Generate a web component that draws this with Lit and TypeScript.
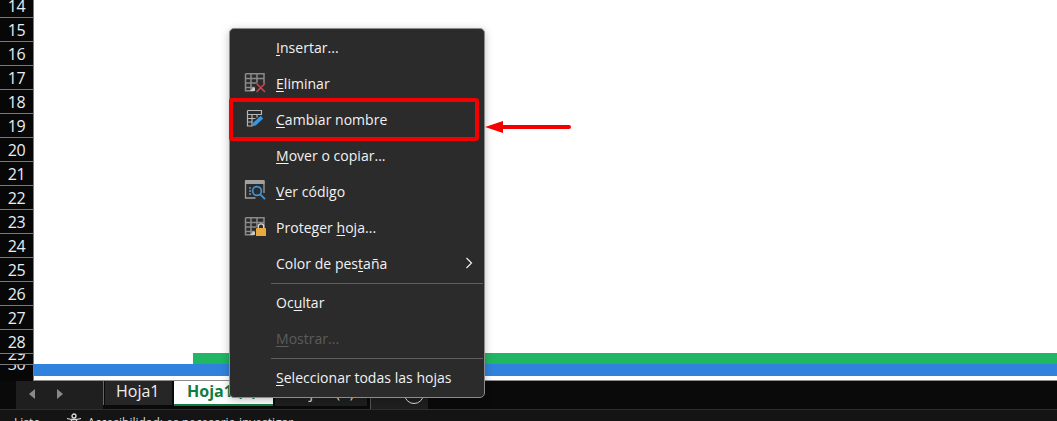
import { LitElement, html, css, svg } from "lit";
import { customElement } from "lit/decorators.js";

const grid = svg`<path d="M1.5 .8h18.5v10M1.5 .8v17h8l-2.5 0M1.5 5.5h18.5M1.5 10h11M1.5 14.5h9M7 .8v17M13 .8v9M20 .8v9" fill="none" stroke="#8a8a8a" stroke-width="1.5"/><path d="M6 18l3-3.5h2V18z" fill="#c8c8c8"/>`;

const icons: Record<string, unknown> = {
  del: html`<svg viewBox="0 0 22 20" width="22" height="20">${grid}<path d="M12.5 10.5l8.5 8.5M21 10.5l-8.5 8.5" stroke="#c8474d" stroke-width="1.6" fill="none"/></svg>`,
  ren: html`<svg viewBox="0 0 22 20" width="22" height="20"><path d="M3.5 1.5h14v4.5M3.5 1.5v15.5h5M3.5 5.5h14M3.5 9.5h8M3.5 13h5M8 5.5v11.5M13 5.5v3" fill="none" stroke="#b5b5b5" stroke-width="1.2"/><path d="M8.2 17.6l1.2-4 7.2-6.8 2.6 2.6-7.2 6.9z" fill="#3a96dd"/></svg>`,
  code: html`<svg viewBox="0 0 22 20" width="22" height="20" style="overflow:visible"><path d="M1.5 0v17h10M20 0v12" fill="none" stroke="#a0a0a0" stroke-width="1.3"/><path d="M1 -1h19.5v4H1z" fill="#a0a0a0"/><path d="M5 7h2M5 10h2M5 13h2" stroke="#8a8a8a" stroke-width="1.4"/><circle cx="13" cy="10" r="4.4" fill="none" stroke="#3a96dd" stroke-width="1.7"/><path d="M16 13.2l5 5" stroke="#3a96dd" stroke-width="1.9"/></svg>`,
  prot: html`<svg viewBox="0 0 22 20" width="22" height="20">${grid}<rect x="12" y="11" width="10" height="8" rx=".5" fill="#e8a93f"/><path d="M14.3 11V9.5a2.7 2.7 0 0 1 5.4 0V11" fill="none" stroke="#d8d8d8" stroke-width="1.3"/></svg>`,
};

const rows = [14, 15, 16, 17, 18, 19, 20, 21, 22, 23, 24, 25, 26, 27, 28];

@customElement("app-root")
export class AppRoot extends LitElement {
  static styles = css`
    :host { display: block; width: 1057px; height: 421px; overflow: hidden; position: relative; background: #fff;
      font-family: "Open Sans", "Noto Sans", sans-serif; }
    .sheet { display: grid; grid-template-columns: 34px 1fr; height: 381px; }
    .head { background: #070707; display: flex; flex-direction: column; justify-content: flex-end; border-right: 1px solid #7a7a7a; overflow: hidden; }
    .rn { flex: none; height: 24px; box-sizing: border-box; border-bottom: 1px solid #7a7a7a; color: #e6edf5; font-size: 16px; letter-spacing: -.5px; display: flex; align-items: center; justify-content: center; overflow: hidden; line-height: 16px; }
    .rn.s29 { height: 11px; align-items: flex-end; }
    .rn.s29 span { margin-bottom: 2px; }
    .rn.s30 { height: 16px; align-items: flex-start; border-bottom: 0; }
    .rn.s30 span { margin-top: -9px; }
    .cells { display: flex; flex-direction: column; justify-content: flex-end; border-bottom: 1px solid #8c8c8c; }
    .green { height: 11px; margin-left: 159px; background: #21b663; }
    .blue { height: 12px; background: #3182dc; margin-bottom: 4px; }
    .tabs { height: 28px; background: #0a0a0a; display: flex; align-items: flex-start; }
    .nav { width: 87px; height: 28px; margin-left: 16px; background: #1f1f1f; display: flex; align-items: center; gap: 22px; padding: 0 0 2px 13px; box-sizing: border-box; flex: none; }
    .tri { width: 0; height: 0; border-top: 5px solid transparent; border-bottom: 5px solid transparent; }
    .tri.l { border-right: 6px solid #8a8a8a; }
    .tri.r { border-left: 6px solid #8a8a8a; }
    .tab { box-sizing: border-box; height: 25px; font-size: 16px; display: flex; align-items: center; flex: none; padding-bottom: 4px; }
    .t1 { width: 71px; height: 24px; background: #262626; color: #eee; border-left: 1px solid #666; padding-left: 12px; border-right: 2px solid #0a0a0a; box-shadow: inset 1px 0 0 #0a0a0a; }
    .t2 { width: 99px; background: #fff; color: #107c41; font-weight: 700; border-bottom: 2px solid #107c41; padding-left: 13px; }
    .t3 { width: 92px; margin-left: 2px; background: #1f1f1f; color: #ddd; justify-content: center; }
    .add { width: 58px; margin-left: 3px; background: #1f1f1f; height: 28px; box-sizing: border-box; border-left: 1px solid #555; padding: 3px 0 0 33px; flex: none; }
    .circle { width: 20px; height: 20px; box-sizing: border-box; border: 1.5px solid #ddd; border-radius: 50%; }
    .status { height: 12px; box-sizing: border-box; background: #141414; border-top: 1px solid #2e2e2e; color: #ddd; font-size: 12px; display: flex; padding-left: 14px; align-items: flex-start; overflow: hidden; }
    .status span, .status svg { flex: none; }
    .status span { line-height: 14px; margin-top: 6px; }
    .status svg { margin: 3px 6px 0 25px; }
    .menu { position: absolute; left: 229px; top: 28px; width: 256px; height: 370px; box-sizing: border-box; background: #2b2b2b; border: 1px solid #8b8b8b; border-radius: 5px; color: #f2f2f2; font-size: 14px; letter-spacing: .03px; box-shadow: 0 2px 8px rgba(0, 0, 0, .25); }
    .item { height: 36px; display: flex; align-items: center; position: relative; }
    .ic { width: 46px; padding-left: 14px; box-sizing: border-box; display: flex; align-items: center; flex: none; }
    .ic svg { display: block; }
    .dis { color: #5c5c5c; }
    .sep { height: 1px; background: #5f5f5f; margin: 2px 1px 0 41px; }
    .chev { position: absolute; right: 11px; top: 12px; }
    u { text-underline-offset: 2px; text-decoration-thickness: 1px; }
    .hl { position: absolute; left: 229px; top: 98px; width: 250px; height: 43px; box-sizing: border-box; border: 4px solid #f50000; border-radius: 3px; }
    .arrow { position: absolute; left: 484px; top: 117px; }
  `;

  private item(label: unknown, icon?: string, cls = "") {
    return html`<div class="item ${cls}"><span class="ic">${icon ? icons[icon] : ""}</span><span>${label}</span></div>`;
  }

  render() {
    return html`
      <div class="sheet">
        <div class="head">
          ${rows.map((n) => html`<div class="rn"><span>${n}</span></div>`)}
          <div class="rn s29"><span>29</span></div>
          <div class="rn s30"><span>30</span></div>
        </div>
        <div class="cells"><div class="green"></div><div class="blue"></div></div>
      </div>
      <div class="tabs">
        <div class="nav"><i class="tri l"></i><i class="tri r"></i></div>
        <div class="tab t1">Hoja1</div>
        <div class="tab t2">Hoja1 (2)</div>
        <div class="tab t3">Hoja1 (3)</div>
        <div class="add"><div class="circle"></div></div>
      </div>
      <div class="status">
        <span>Listo</span>
        <svg width="16" height="16" viewBox="0 0 16 16"><circle cx="8" cy="3" r="2" fill="none" stroke="#ddd" stroke-width="1.3"/><path d="M1 5.5c3 1 4 1 7 1s4 0 7-1M5.5 7v8M10.5 7v8" fill="none" stroke="#ddd" stroke-width="1.3"/></svg>
        <span>Accesibilidad: es necesario investigar</span>
      </div>
      <div class="menu">
        ${this.item(html`<u>I</u>nsertar...`)}
        ${this.item(html`<u>E</u>liminar`, "del")}
        ${this.item(html`<u>C</u>ambiar nombre`, "ren")}
        ${this.item(html`<u>M</u>over o copiar...`)}
        ${this.item(html`<u>V</u>er código`, "code")}
        ${this.item(html`Proteger <u>h</u>oja...`, "prot")}
        <div class="item"><span class="ic"></span><span>Color de pes<u>t</u>aña</span>
          <svg class="chev" width="8" height="12" viewBox="0 0 8 12"><path d="M1.5 1l5 5-5 5" fill="none" stroke="#eee" stroke-width="1.2"/></svg></div>
        <div class="sep"></div>
        ${this.item(html`Oc<u>u</u>ltar`)}
        ${this.item(html`<u>M</u>ostrar...`, undefined, "dis")}
        <div class="sep"></div>
        ${this.item(html`<u>S</u>eleccionar todas las hojas`)}
      </div>
      <div class="hl"></div>
      <svg class="arrow" width="90" height="20" viewBox="0 0 90 20">
        <path d="M1 10l18-6v4h66a2 2 0 0 1 0 4H19v4z" fill="#f50000"/>
      </svg>
    `;
  }
}
